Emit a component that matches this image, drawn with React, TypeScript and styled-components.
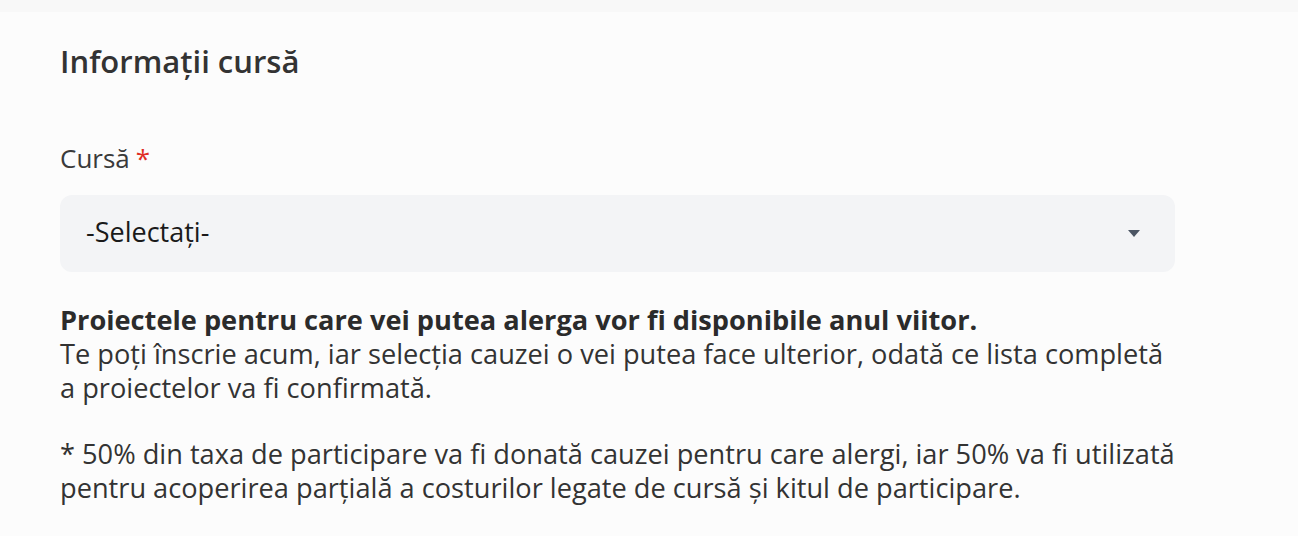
import React from "react";
import styled, { createGlobalStyle } from "styled-components";

const GlobalStyle = createGlobalStyle`
  html, body {
    margin: 0;
    padding: 0;
    background: #f8f8f8;
  }
  body {
    font-family: "Open Sans", "Noto Sans", sans-serif;
    color: #333333;
  }
`;

const Page = styled.div`
  padding-top: 12px;
  min-height: 536px;
  box-sizing: border-box;
`;

const Card = styled.section`
  background: #fcfcfc;
  padding: 29px 60px 40px 60px;
  min-height: 524px;
  box-sizing: border-box;
`;

const Title = styled.h2`
  margin: 0;
  font-size: 31px;
  line-height: 40px;
  font-weight: 600;
  color: #333333;
`;

const Field = styled.div`
  margin-top: 60px;
  width: 1115px;
  display: flex;
  flex-direction: column;
  gap: 20px;
`;

const Label = styled.label`
  font-size: 26px;
  line-height: 34px;
  font-weight: 400;
  color: #3a3a3a;
`;

const Required = styled.span`
  color: #e02d24;
  margin-left: 6px;
`;

const SelectBox = styled.div`
  height: 77px;
  border-radius: 12px;
  background: #f3f4f6;
  display: flex;
  align-items: center;
  justify-content: space-between;
  padding: 0 35px 0 26px;
  box-sizing: border-box;
`;

const SelectText = styled.span`
  font-size: 27px;
  line-height: 36px;
  color: #1a1a1a;
  margin-top: -4px;
`;

const Caret = styled.svg`
  width: 12px;
  height: 7px;
  display: block;
`;

const Notes = styled.div`
  margin-top: 31px;
  width: 1120px;
  font-size: 27.2px;
  line-height: 34px;
  color: #333333;
`;

const Paragraph = styled.p<{ $gap?: number }>`
  margin: 0 0 ${(p) => p.$gap ?? 0}px 0;
`;

const Strong = styled.strong`
  font-weight: 700;
  color: #2b2b2b;
`;

export default function App() {
  return (
    <>
      <GlobalStyle />
      <Page>
        <Card>
          <Title>Informații cursă</Title>
          <Field>
            <Label>
              Cursă<Required>*</Required>
            </Label>
            <SelectBox>
              <SelectText>-Selectați-</SelectText>
              <Caret viewBox="0 0 12 7">
                <path d="M0 0 L12 0 L6 7 Z" fill="#4b5563" />
              </Caret>
            </SelectBox>
          </Field>
          <Notes>
            <Paragraph $gap={32}>
              <Strong>Proiectele pentru care vei putea alerga vor fi disponibile anul viitor.</Strong>
              <br />
              Te poți înscrie acum, iar selecția cauzei o vei putea face ulterior, odată ce lista completă a
              proiectelor va fi confirmată.
            </Paragraph>
            <Paragraph>
              * 50% din taxa de participare va fi donată cauzei pentru care alergi, iar 50% va fi utilizată pentru
              acoperirea parțială a costurilor legate de cursă și kitul de participare.
            </Paragraph>
          </Notes>
        </Card>
      </Page>
    </>
  );
}
